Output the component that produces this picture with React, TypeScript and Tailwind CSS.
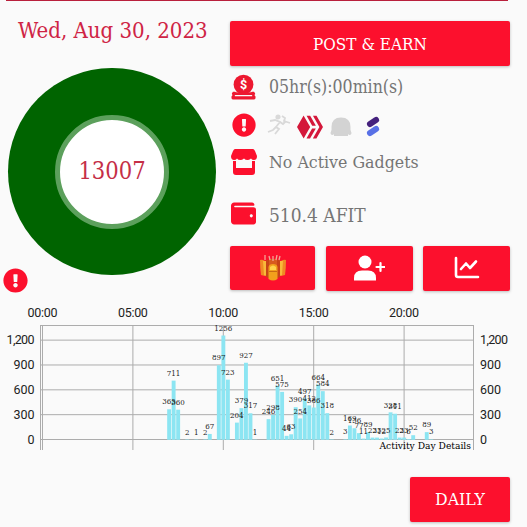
import React from 'react';
import { FaWallet, FaExclamationCircle } from 'react-icons/fa';
import { FaHive } from 'react-icons/fa6';

const ORIGIN = 42.5;
const BASE = 439.5;
const SLOT = 4.52;
const STEP = 0.0828;

// [quarter hour slot, steps]
const activity: [number, number][] = [
  [28, 365], [29, 711], [30, 360], [32, 2], [34, 1], [36, 2], [37, 67],
  [39, 897], [40, 1256], [41, 723], [43, 204], [44, 379], [45, 927], [46, 317], [47, 1],
  [50, 246], [51, 298], [52, 651], [53, 575], [54, 44], [55, 63], [56, 390], [57, 254],
  [58, 497], [59, 412], [60, 386], [61, 664], [62, 584], [63, 318], [64, 2],
  [67, 3], [68, 169], [69, 136], [70, 77], [71, 11], [72, 89], [73, 23], [74, 23], [75, 12], [76, 25],
  [77, 328], [78, 311], [79, 23], [80, 23], [81, 6], [82, 52], [85, 89], [86, 3],
];

const hours = ['00:00', '05:00', '10:00', '15:00', '20:00'];
const levels = [0, 300, 600, 900, 1200];

const Chart = () => (
  <svg width="527" height="160" viewBox="0 300 527 160" className="block font-['Roboto']">
    <g stroke="#acacac" strokeWidth="1">
      <path d="M40 325.5H473.5M40.5 325V450M473.5 325V450" fill="none" />
      {hours.map((h, i) => (
        <line key={h} x1={ORIGIN + i * 90.4} x2={ORIGIN + i * 90.4} y1="325" y2="450" />
      ))}
      {levels.map((l) => (
        <line key={l} x1="40" x2="474" y1={BASE - l * STEP} y2={BASE - l * STEP} />
      ))}
    </g>
    <g fill="#8ce5f2">
      {activity.map(([slot, steps]) => (
        <rect key={slot} x={ORIGIN + slot * SLOT - 1.9} y={BASE - steps * STEP} width="3.9" height={steps * STEP + 0.3} />
      ))}
    </g>
    <g fill="#222" fontSize="12.5">
      {hours.map((h, i) => (
        <text key={h} x={ORIGIN + i * 90.4} y="317" textAnchor="middle" textLength="30">{h}</text>
      ))}
      {levels.map((l) => (
        <React.Fragment key={l}>
          <text x="34.5" y={BASE - l * STEP + 4.3} textAnchor="end" textLength={l === 1200 ? 28 : undefined}>{l.toLocaleString('en-US')}</text>
          <text x="480" y={BASE - l * STEP + 4.3} textLength={l === 1200 ? 28 : undefined}>{l.toLocaleString('en-US')}</text>
        </React.Fragment>
      ))}
    </g>
    <g fill="#1c1c1c" className="font-['DejaVu_Serif_Condensed','DejaVu_Serif',serif]" fontSize="8">
      {activity.map(([slot, steps]) => (
        <text
          key={slot}
          x={ORIGIN + slot * SLOT}
          y={BASE - steps * STEP - 4.8}
          textAnchor="middle"
          textLength={String(steps).length * 4.5}
          lengthAdjust="spacingAndGlyphs"
        >
          {steps}
        </text>
      ))}
      <text x="379.5" y="448.5" fontSize="9.8" fill="#000" textLength="91.5" lengthAdjust="spacingAndGlyphs">Activity Day Details</text>
    </g>
  </svg>
);

const Coin = () => (
  <svg viewBox="0 0 26 26" className="ml-px h-[26px] w-[25px] shrink-0">
    <path d="M2 18H24Q26 20 24.500 21.500L25.500 23V24.500Q25.500 26 24 26H2Q0.500 26 0.500 24.500V23L1.500 21.500Q0 20 2 18Z" fill="#ed1830" />
    <circle cx="13" cy="10.500" r="11.300" fill="#fafafa" />
    <circle cx="13" cy="10.500" r="10.300" fill="#ed1830" />
    <path d="M5 18.500H21V22H5Z" fill="#ed1830" />
    <path d="M4.500 22H21.500" stroke="#fafafa" strokeWidth="1.200" strokeLinecap="round" />
    <text x="13" y="15" textAnchor="middle" fontSize="13" fontWeight="bold" fill="white" className="font-['Roboto']">$</text>
  </svg>
);

const Reward = () => (
  <svg viewBox="0 0 26 26" className="h-[26px] w-[26px]">
    <path d="M0 5Q2 4 5 6V21L1 20Q0 13 0 5Z" fill="#f08a24" />
    <path d="M26 5Q24 4 21 6V21L25 20Q26 13 26 5Z" fill="#f08a24" />
    <path d="M3 6H6V21L4 20ZM20 6H23L22 20L20 21Z" fill="#f9b93a" />
    <path d="M6 5H9V23L6 22ZM17 5H20V22L17 23Z" fill="#c84416" />
    <path d="M9 4H17V11H9Z" fill="#d85a1e" />
    <path d="M5 0V5M9 1L10 5M13 1V6M17 0L16 5M20 1L19 5" stroke="#f4a294" strokeWidth="1.3" />
    <path d="M8.500 12Q9 9 13 9Q17 9 17.500 12V24Q13 27 8.500 24Z" fill="#f2a01c" />
    <path d="M10 12Q13 9 16 12V15H10Z" fill="#ffd24c" />
    <path d="M9 16.500H17" stroke="#c96a12" />
  </svg>
);

const AddFriend = () => (
  <svg viewBox="0 0 32 26" className="mb-px h-[26px] w-8" fill="white">
    <circle cx="12" cy="7" r="6.500" />
    <path d="M1 25.500V23Q1 15.500 9 15.500H15Q23 15.500 23 23V25.500Z" />
    <path d="M27.500 8V16M23.500 12H31.500" stroke="white" strokeWidth="2.200" strokeLinecap="round" />
  </svg>
);

const button = 'flex items-center justify-center rounded-[2px] bg-[#fc102d] text-white shadow-[0_1px_3px_rgba(0,0,0,0.25)]';
const slab = "font-['DejaVu_Serif_Condensed','DejaVu_Serif',serif] whitespace-nowrap";

const App = () => {
  return (
    <div className="h-[527px] w-[527px] overflow-hidden bg-[#fafafa]">
      <div className="ml-1.5 h-px w-[502px] bg-[#b9203c]" />
      <div className="flex h-[299px]">
        <section className="w-[230px] shrink-0">
          <h1 className={`${slab} ml-[18px] mt-[14px] h-8 text-[22px] leading-8 text-[#cf2445]`}>
            Wed, Aug 30, 2023
          </h1>
          <div className="ml-2 mt-[21px] flex h-[207px] w-[208px] items-center justify-center rounded-full bg-[#006400]">
            <div className="flex h-[114px] w-[114px] items-center justify-center rounded-full border-[5px] border-[#5ca05c] bg-white">
              <span className={`${slab} pt-px text-[23.500px] text-[#c52e46]`}>13007</span>
            </div>
          </div>
          <FaExclamationCircle className="-mt-[7px] ml-[3px] h-[25px] w-[25px] text-[#fc102d]" />
        </section>

        <section className="w-[280px] pt-5 text-[#757575]">
          <button className={`${button} h-[45px] w-full`}>
            <span className={`${slab} pt-[2px] text-[17px]`}>POST &amp; EARN</span>
          </button>
          <div className="mt-[5px] flex h-[31px] items-center gap-[13px]">
            <Coin />
            <span className={`${slab} origin-left scale-x-[0.975] text-[18px]`}>05hr(s):00min(s)</span>
          </div>
          <div className="mt-[6px] flex h-[34px] items-center">
            <FaExclamationCircle className="ml-[2px] h-6 w-6 text-[#fc102d]" />
            <svg viewBox="0 0 24 24" className="ml-[11px] h-6 w-6" fill="none" stroke="#d9d9d9" strokeWidth="1.8">
              <circle cx="11" cy="4" r="1.7" fill="#d9d9d9" />
              <path d="M3 8L8 7L13 9L9 14L12 16L8 21M9 14L6 17L1 19M13 9L16 11L19 8M15 3L18 5L17 8L23 10" />
            </svg>
            <FaHive className="ml-[6px] mt-1 h-[26px] w-[26px] text-[#d4173a]" />
            <svg viewBox="0 0 22 20" className="ml-[7px] mt-[3px] h-5 w-[22px]" fill="#d3d3d3">
              <path d="M1.500 13V10Q1.500 0.500 11 0.500Q20.500 0.500 20.500 10V13Q22 16 21 17.500Q19 18.500 18 17V19H4V17Q3 18.500 1 17.500Q0 16 1.500 13Z" />
            </svg>
            <svg viewBox="0 0 14 22" className="ml-[14px] mt-1 h-[22px] w-[14px]" strokeLinecap="round" strokeWidth="6">
              <path d="M4 8L10 4" stroke="#45217d" />
              <path d="M4 17L10 13" stroke="#5870e6" />
            </svg>
          </div>
          <div className="mt-[5px] flex h-[30px] items-center gap-[12px]">
            <svg viewBox="0 0 26 26" className="ml-[1px] h-[26px] w-[26px] shrink-0" fill="#fc102d">
              <path d="M4 0H22Q23 0 24 2L26 7Q26 11 23 11Q21 11 20 9.5Q18 11 16.5 11Q14.5 11 13 9.5Q11 11 9.5 11Q7 11 6 9.5Q5 11 3 11Q0 11 0 7L2 2Q3 0 4 0Z" />
              <path d="M2 12H5V19H21V12H24V23Q24 26 21 26H5Q2 26 2 23Z" />
            </svg>
            <span className={`${slab} origin-left scale-x-[1.035] pt-px text-[17px]`}>No Active Gadgets</span>
          </div>
          <div className="mt-[22px] flex h-[32px] items-center gap-[13px]">
            <FaWallet className="-mt-[3px] ml-px h-[25px] w-[25px] shrink-0 text-[#fc102d]" />
            <span className={`${slab} origin-left text-[19px]`}>510.4 AFIT</span>
          </div>
          <div className="mt-[15px] flex justify-between">
            <button className={`${button} h-[44px] w-[85px]`}><Reward /></button>
            <button className={`${button} h-[45px] w-[87px]`}><AddFriend /></button>
            <button className={`${button} h-[45px] w-[87px]`}>
              <svg viewBox="0 0 26 24" className="mb-px h-6 w-[26px]" fill="none" stroke="white" strokeWidth="2.6" strokeLinecap="round" strokeLinejoin="round">
                <path d="M2 2V19Q2 21 4 21H24" />
                <path d="M7 13L12 7.500L16 12L22 5.500" />
              </svg>
            </button>
          </div>
        </section>
      </div>
      <Chart />
      <div className="flex justify-end pr-[17px] pt-[17px]">
        <button className={`${button} h-[45px] w-[100px]`}>
          <span className={`${slab} text-[17.500px]`}>DAILY</span>
        </button>
      </div>
    </div>
  );
};

export default App;
